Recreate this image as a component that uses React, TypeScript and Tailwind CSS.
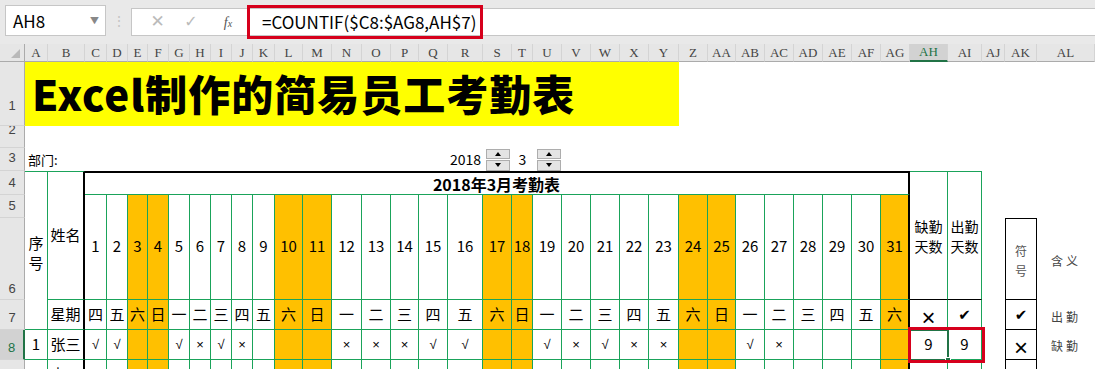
import clsx from "clsx";

const letters = [
  "A", "B", "C", "D", "E", "F", "G", "H", "I", "J", "K", "L", "M", "N", "O", "P", "Q", "R", "S",
  "T", "U", "V", "W", "X", "Y", "Z", "AA", "AB", "AC", "AD", "AE", "AF", "AG", "AH", "AI", "AJ", "AK", "AL",
];

const days = Array.from({ length: 31 }, (_, i) => i + 1);
const weekNames = ["四", "五", "六", "日", "一", "二", "三"];
const weekend = [3, 4, 10, 11, 17, 18, 24, 25, 31];

const marks: Record<number, string> = {
  1: "√", 2: "√", 5: "√", 6: "×", 7: "√", 8: "×", 12: "×", 13: "×", 14: "×", 15: "√", 16: "√",
  19: "√", 20: "×", 21: "√", 22: "×", 23: "×", 26: "√", 27: "×",
};

const line = "border-[#1aa35a]";

function dayClass(d: number) {
  return clsx(
    "flex items-center justify-center border-r border-b",
    line,
    d === 31 && "border-r-2 border-r-black",
    weekend.includes(d) && "bg-[#ffc000]",
  );
}

function RowHead({ n, active, pad }: { n: string; active?: boolean; pad?: string }) {
  return (
    <div
      className={clsx(
        "flex items-end justify-center border-b border-[#d4d4d4] font-['Liberation_Sans',sans-serif] text-[13px] leading-none",
        active
          ? "border-r-2 border-r-[#217346] bg-[#d2d2d2] text-[#217346]"
          : "border-r border-r-[#ababab] bg-[#e6e6e6] text-[#444]",
        pad ?? "pb-[5px]",
      )}
    >
      {n}
    </div>
  );
}

function Spinner() {
  return (
    <div className="flex h-[22px] w-[24px] flex-col gap-[1px]">
      <div className="flex flex-1 items-center justify-center border border-[#adadad] bg-[#e4e4e4]">
        <div className="h-0 w-0 border-x-[3px] border-b-[4px] border-x-transparent border-b-black" />
      </div>
      <div className="flex flex-1 items-center justify-center border border-[#adadad] bg-[#e4e4e4]">
        <div className="h-0 w-0 border-x-[3px] border-t-[4px] border-x-transparent border-t-black" />
      </div>
    </div>
  );
}

export default function App() {
  return (
    <div className="h-[369px] w-[1095px] overflow-hidden bg-white font-['Noto_Sans_CJK_SC','Noto_Sans',sans-serif] text-black">
      {/* formula bar */}
      <div className="flex h-[44px] items-start bg-[#e9e9e9] pl-[5px] pt-[5px]">
        <div className="flex h-[31px] w-[101px] items-center justify-between border border-[#c6c6c6] bg-white pl-[7px] pr-[6px] text-[17px]">
          <span>AH8</span>
          <span className="text-[9px] text-[#888]">▼</span>
        </div>
        <div className="flex h-[31px] w-[25px] items-center justify-center text-[14px] text-[#c4c4c4]">⋮</div>
        <div className="mt-[3px] flex h-[28px] flex-1 items-center border border-r-0 border-[#c6c6c6] bg-white">
          <span className="w-[51px] text-center font-['DejaVu_Sans',sans-serif] text-[17px] text-[#bbb]">✕</span>
          <span className="w-[16px] text-center font-['DejaVu_Sans',sans-serif] text-[16px] text-[#bbb]">✓</span>
          <span className="ml-[22px] w-[14px] text-center font-['Liberation_Serif',serif] text-[14px] italic text-[#555]">
            f<span className="text-[10px]">x</span>
          </span>
          <div className="ml-[12px] flex h-[34px] w-[236px] items-center border-[3px] border-[#d6001c] pl-[12px] text-[17px]">
            =COUNTIF($C8:$AG8,AH$7)
          </div>
        </div>
      </div>

      {/* sheet */}
      <div className="relative grid grid-cols-[25px_23px_37px_22px_21px_20px_21px_21px_21px_21px_21px_22px_28px_29px_30px_29px_28px_29px_35px_29px_21px_29px_29px_29px_29px_30px_29px_28px_29px_29px_29px_29px_29px_29px_38px_34px_23px_32px_58px] grid-rows-[18px_64px_22px_23px_24px_23px_82px_30px_30px_30px]">
        {/* column headers */}
        <div className="relative border-r border-b border-[#ababab] bg-[#e6e6e6]">
          <div className="absolute right-[4px] bottom-[3px] h-0 w-0 border-l-[9px] border-t-[9px] border-l-transparent border-t-transparent border-b-0 border-r-[0px] [border-bottom:9px_solid_#b9b9b9]" />
        </div>
        {letters.map((l) => (
          <div
            key={l}
            className={clsx(
              "flex items-center justify-center font-['Liberation_Serif',serif] text-[13px]",
              l === "AH"
                ? "border-b-2 border-r border-b-[#217346] border-r-[#d4d4d4] bg-[#d2d2d2] text-[#217346]"
                : "border-r border-b border-r-[#d4d4d4] border-b-[#ababab] bg-[#e6e6e6] text-[#444]",
            )}
          >
            {l}
          </div>
        ))}

        {/* row 1 */}
        <RowHead n="1" pad="pb-[13px]" />
        <div className="col-span-25 flex items-center bg-[#ffff00] pb-[2px] pl-[7px] text-[42px] leading-none font-black tracking-[1px]">
          Excel制作的简易员工考勤表
        </div>
        <div className="col-span-13" />

        {/* row 2 */}
        <div className="flex items-start justify-center overflow-hidden border-r border-b border-r-[#ababab] border-b-[#d4d4d4] bg-[#e6e6e6] font-['Liberation_Sans',sans-serif] text-[13px] leading-none text-[#444]">
          <span className="-mt-[3px]">2</span>
        </div>
        <div className="col-span-38" />

        {/* row 3 */}
        <RowHead n="3" pad="pb-[6px]" />
        <div className="col-span-16 flex items-center pl-[3px] text-[13px]">部门:</div>
        <div />
        <div className="flex items-center justify-center text-[14px]">2018</div>
        <div className="flex items-center justify-center">
          <Spinner />
        </div>
        <div className="flex items-center justify-center text-[14px]">3</div>
        <div className="flex items-center justify-start pl-[4px]">
          <Spinner />
        </div>
        <div className="col-span-17" />

        {/* row 4 */}
        <RowHead n="4" />
        <div className={clsx("row-span-4 flex items-center justify-center border-t border-r border-b pt-[4px] text-center text-[15px] leading-[20px]", line)}>
          序<br />号
        </div>
        <div className={clsx("row-span-3 flex items-center justify-center border-t border-b border-r-2 border-r-black text-[15px]", line)}>
          姓名
        </div>
        <div className={clsx("col-span-31 flex items-center justify-center border-t-2 border-r-2 border-b border-t-black border-r-black text-[16px] font-bold", line)}>
          2018年3月考勤表
        </div>
        <div className={clsx("row-span-3 flex items-center justify-center border-t border-r border-b border-b-black text-center text-[14px] leading-[20px]", line)}>
          缺勤<br />天数
        </div>
        <div className={clsx("row-span-3 flex items-center justify-center border-t border-r border-b border-b-black text-center text-[14px] leading-[20px]", line)}>
          出勤<br />天数
        </div>
        <div className="col-span-3" />

        {/* row 5 */}
        <RowHead n="5" />
        {days.map((d) => (
          <div key={d} className={clsx(dayClass(d), "row-span-2 pb-[2px] text-[15px]")}>
            {d}
          </div>
        ))}
        <div className="col-span-3" />

        {/* row 6 */}
        <RowHead n="6" pad="pb-[4px]" />
        <div />
        <div className="flex items-center justify-center border border-black pt-[4px] text-center text-[12px] leading-[20px] text-[#555]">
          符<br />号
        </div>
        <div className="flex items-center justify-center pt-[4px] text-[12px] tracking-[3px] text-[#444]">含义</div>

        {/* row 7 */}
        <RowHead n="7" pad="pb-[5px]" />
        <div className={clsx("flex items-center justify-center border-r-2 border-b border-r-black text-[15px]", line)}>星期</div>
        {days.map((d) => (
          <div key={d} className={clsx(dayClass(d), "text-[15px]")}>
            {weekNames[(d - 1) % 7]}
          </div>
        ))}
        <div className={clsx("flex items-center justify-center border-r border-b pt-[6px] font-['Liberation_Sans',sans-serif] text-[24px] leading-none font-light", line)}>×</div>
        <div className={clsx("flex items-center justify-center border-r border-b pt-[2px] font-['DejaVu_Sans',sans-serif] text-[15px]", line)}>✔</div>
        <div />
        <div className="flex items-center justify-center border-x border-b border-black pt-[2px] font-['DejaVu_Sans',sans-serif] text-[15px]">✔</div>
        <div className="flex items-center justify-center pt-[4px] text-[12px] tracking-[3px] text-[#444]">出勤</div>

        {/* row 8 */}
        <RowHead n="8" active pad="pb-[5px]" />
        <div className={clsx("flex items-center justify-center border-r border-b text-[15px]", line)}>1</div>
        <div className={clsx("flex items-center justify-center border-r-2 border-b border-r-black text-[15px]", line)}>张三</div>
        {days.map((d) => (
          <div key={d} className={clsx(dayClass(d), "font-['Liberation_Sans',sans-serif] text-[13px]")}>
            {marks[d] ?? ""}
          </div>
        ))}
        <div className={clsx("flex items-center justify-center border-r border-b text-[15px]", line)}>9</div>
        <div className={clsx("flex items-center justify-center border-r border-b text-[15px]", line)}>9</div>
        <div />
        <div className="flex items-center justify-center border-x border-b border-black pt-[6px] font-['Liberation_Sans',sans-serif] text-[24px] leading-none font-light">×</div>
        <div className="flex items-center justify-center pt-[2px] text-[12px] tracking-[3px] text-[#444]">缺勤</div>

        {/* row 9 */}
        <RowHead n="9" />
        <div className={clsx("flex items-center justify-center border-r border-b text-[15px]", line)}>2</div>
        <div className={clsx("flex items-center justify-center border-r-2 border-b border-r-black text-[15px]", line)}>李四</div>
        {days.map((d) => (
          <div key={d} className={dayClass(d)} />
        ))}
        <div className={clsx("border-r border-b", line)} />
        <div className={clsx("border-r border-b", line)} />
        <div />
        <div className="border-x border-b border-black" />
        <div />

        {/* active cell AH8 and the red mark over AH8:AI8 */}
        <div className="absolute top-[285px] left-[909px] h-[32px] w-[40px] border-2 border-[#217346]" />
        <div className="absolute top-[313px] left-[945px] h-[6px] w-[6px] border border-white bg-[#217346]" />
        <div className="absolute top-[283px] left-[908px] h-[36px] w-[77px] border-[3px] border-[#d6001c]" />
      </div>
    </div>
  );
}
